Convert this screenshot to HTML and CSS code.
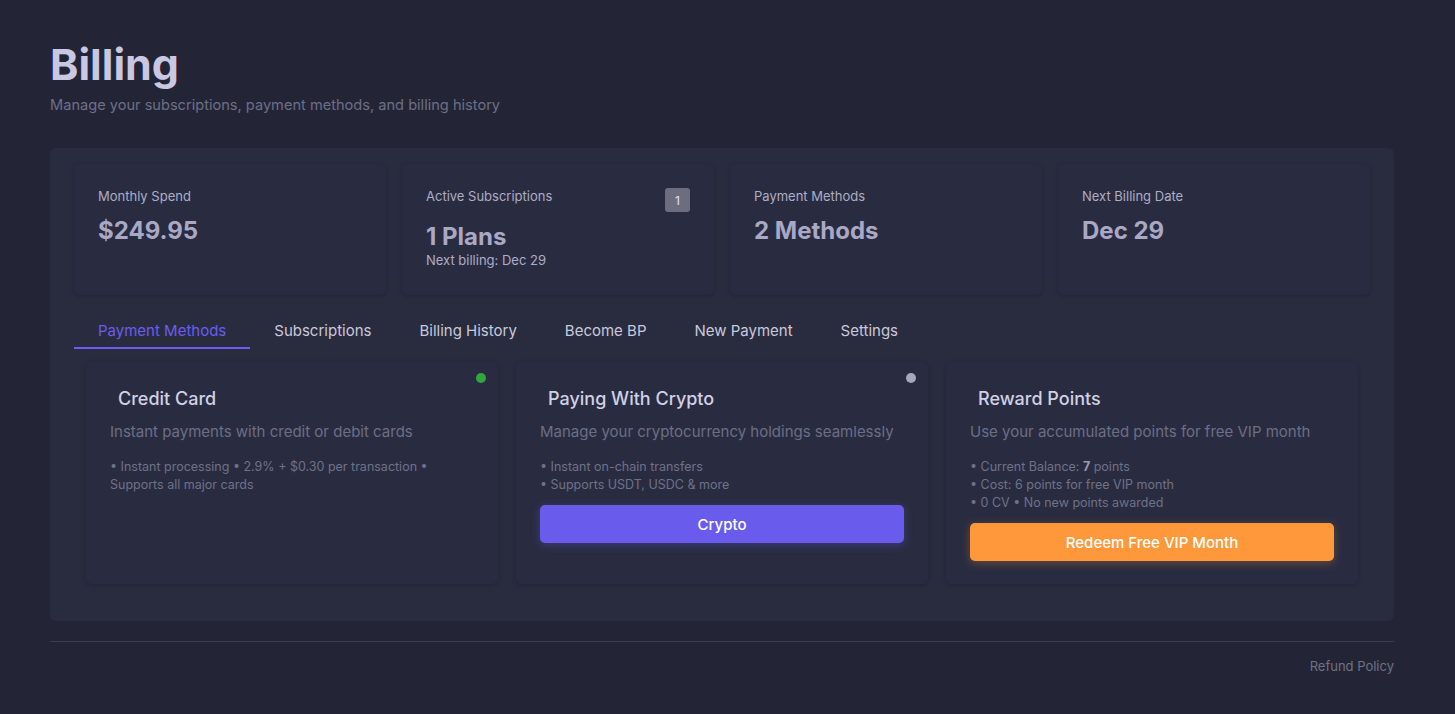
FILE: index.html
```html
<!DOCTYPE html>
<html lang="en">
<head>
    <meta charset="UTF-8">
    <meta name="viewport" content="width=device-width, initial-scale=1.0">
    <title>Billing</title>
    <link rel="stylesheet" href="styles.css">
</head>
<body>
    <div class="page">
        <header class="page-header">
            <h1>Billing</h1>
            <p>Manage your subscriptions, payment methods, and billing history</p>
        </header>

        <main class="billing-panel">
            <section class="stats">
                <div class="stat-card">
                    <span class="stat-label">Monthly Spend</span>
                    <strong class="stat-value">$249.95</strong>
                </div>
                <div class="stat-card">
                    <span class="stat-label">Active Subscriptions</span>
                    <span class="badge">1</span>
                    <strong class="stat-value stat-value-low">1 Plans</strong>
                    <span class="stat-note">Next billing: Dec 29</span>
                </div>
                <div class="stat-card">
                    <span class="stat-label">Payment Methods</span>
                    <strong class="stat-value">2 Methods</strong>
                </div>
                <div class="stat-card">
                    <span class="stat-label">Next Billing Date</span>
                    <strong class="stat-value">Dec 29</strong>
                </div>
            </section>

            <nav class="tabs">
                <a class="tab active">Payment Methods</a>
                <a class="tab">Subscriptions</a>
                <a class="tab">Billing History</a>
                <a class="tab">Become BP</a>
                <a class="tab">New Payment</a>
                <a class="tab">Settings</a>
            </nav>

            <div class="methods">
                <div class="method-card">
                    <span class="status-dot online"></span>
                    <h3>Credit Card</h3>
                    <p class="method-desc">Instant payments with credit or debit cards</p>
                    <p class="method-list">• Instant processing • 2.9% + $0.30 per transaction • Supports all major cards</p>
                </div>
                <div class="method-card">
                    <span class="status-dot"></span>
                    <h3>Paying With Crypto</h3>
                    <p class="method-desc">Manage your cryptocurrency holdings seamlessly</p>
                    <ul class="method-list">
                        <li>• Instant on-chain transfers</li>
                        <li>• Supports USDT, USDC &amp; more</li>
                    </ul>
                    <button class="btn btn-primary">Crypto</button>
                </div>
                <div class="method-card">
                    <h3>Reward Points</h3>
                    <p class="method-desc">Use your accumulated points for free VIP month</p>
                    <ul class="method-list">
                        <li>• Current Balance: <b>7</b> points</li>
                        <li>• Cost: 6 points for free VIP month</li>
                        <li>• 0 CV • No new points awarded</li>
                    </ul>
                    <button class="btn btn-orange">Redeem Free VIP Month</button>
                </div>
            </div>
        </main>

        <footer class="page-footer">
            <a>Refund Policy</a>
        </footer>
    </div>
</body>
</html>
```

FILE: styles.css
```css
* {
    margin: 0;
    padding: 0;
    box-sizing: border-box;
}

body {
    font-family: 'Inter', 'Noto Sans', sans-serif;
    background: #232536;
    color: #c9c8de;
    min-height: 100vh;
}

.page {
    padding: 38px 61px 30px 50px;
}

.page-header h1 {
    font-size: 43px;
    font-weight: 700;
    color: #c9c7e2;
    line-height: 52px;
}

.page-header p {
    margin-top: 6px;
    font-size: 14.6px;
    color: #6d6f87;
}

.billing-panel {
    margin-top: 34px;
    background: #292c3f;
    border-radius: 6px;
    padding: 16px 24px 37px;
}

.stats {
    display: grid;
    grid-template-columns: repeat(4, 1fr);
    gap: 16px;
}

.stat-card {
    position: relative;
    height: 131px;
    padding: 24px;
    background: #292c40;
    border-radius: 6px;
    box-shadow: 0 1px 4px rgba(0, 0, 0, 0.18);
    display: flex;
    flex-direction: column;
}

.stat-label {
    font-size: 13px;
    color: #aeadc6;
    line-height: 16px;
}

.stat-value {
    margin-top: 12px;
    font-size: 24px;
    font-weight: 700;
    color: #a9a8c5;
    line-height: 30px;
}

.stat-value-low {
    margin-top: 18px;
}

.stat-note {
    font-size: 13px;
    color: #aeadc6;
    line-height: 16px;
}

.badge {
    position: absolute;
    top: 24px;
    right: 24px;
    width: 25px;
    height: 24px;
    border-radius: 3px;
    background: #6c6e80;
    color: #e4e4ee;
    font-size: 12px;
    display: flex;
    align-items: center;
    justify-content: center;
}

.tabs {
    display: flex;
    margin-top: 16px;
}

.tab {
    padding: 11px 24px 7px;
    font-size: 15px;
    line-height: 18px;
    color: #c9c9dc;
    border-bottom: 2px solid transparent;
    cursor: pointer;
}

.tab.active {
    color: #6a5df0;
    border-bottom-color: #6a5df0;
}

.methods {
    display: grid;
    grid-template-columns: repeat(3, 1fr);
    gap: 18px;
    padding: 13px 12px 0;
}

.method-card {
    position: relative;
    height: 222px;
    padding: 26px 24px 24px;
    background: #292c40;
    border-radius: 6px;
    box-shadow: 0 1px 5px rgba(0, 0, 0, 0.2);
}

.method-card h3 {
    padding-left: 8px;
    font-size: 18px;
    font-weight: 500;
    line-height: 22px;
    color: #d1d0e4;
}

.method-desc {
    margin-top: 11px;
    font-size: 15px;
    line-height: 22px;
    color: #6c6e86;
}

.method-list {
    margin-top: 15px;
    list-style: none;
    font-size: 12.5px;
    line-height: 18px;
    color: #6f7189;
}

.method-list b {
    color: #9a9ab2;
}

.status-dot {
    position: absolute;
    top: 11px;
    right: 12px;
    width: 10px;
    height: 10px;
    border-radius: 50%;
    background: #a7a6be;
}

.status-dot.online {
    background: #2ea83d;
}

.btn {
    display: block;
    width: 100%;
    margin-top: 11px;
    height: 38px;
    border: none;
    border-radius: 5px;
    color: #fff;
    font-family: inherit;
    font-size: 15px;
    font-weight: 500;
    cursor: pointer;
}

.btn-primary {
    background: #695cec;
    box-shadow: 0 2px 8px rgba(105, 92, 236, 0.35);
}

.btn-orange {
    background: #fe983a;
    box-shadow: 0 2px 8px rgba(254, 152, 58, 0.3);
}

.page-footer {
    margin-top: 20px;
    border-top: 1px solid #3a3c4f;
    padding-top: 13px;
    text-align: right;
}

.page-footer a {
    font-size: 13px;
    color: #6f7187;
    cursor: pointer;
}
```
